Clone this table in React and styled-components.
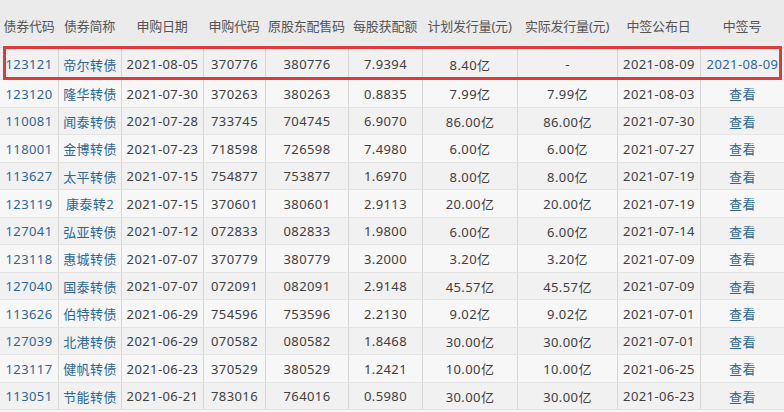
import React from "react";
import styled, { createGlobalStyle } from "styled-components";

const Global = createGlobalStyle`
  html, body { margin: 0; padding: 0; background: #ffffff; }
  body { font-family: "Noto Sans", "Noto Sans CJK SC", sans-serif; }
`;

const COLS = "58px 63px 82px 62px 83px 74px 95px 100px 83px 84px";

const Table = styled.div`
  width: 784px;
  height: 412px;
  overflow: hidden;
  background: #f3f3f3;
  font-size: 13px;
  color: #404040;
`;

const HeaderRow = styled.div`
  display: grid;
  grid-template-columns: ${COLS};
  height: 48px;
  background: #ebebeb;
  border-bottom: 1px solid #dcdcdc;
  box-sizing: border-box;
`;

const HeadCell = styled.div`
  display: flex;
  align-items: flex-end;
  justify-content: center;
  padding-bottom: 12px;
  color: #555555;
  white-space: nowrap;
  letter-spacing: -0.2px;
`;

const Row = styled.div`
  position: relative;
  display: grid;
  grid-template-columns: ${COLS};
  height: ${(p) => (p.$first ? "32px" : "27.5px")};
  background: ${(p) => (p.$odd ? "#f7f7f7" : "#f1f1f1")};
  border-bottom: 1px solid #e4e4e4;
  box-sizing: border-box;
`;

const HighlightBox = styled.div`
  position: absolute;
  left: 3px;
  right: 2px;
  top: -2px;
  bottom: -1px;
  border: 3px solid #de3b3f;
  pointer-events: none;
`;

const Cell = styled.div`
  display: flex;
  align-items: center;
  justify-content: center;
  white-space: nowrap;
  letter-spacing: 0.4px;
  padding-top: 1px;
  border-left: ${(p) => (p.$noBorder ? "none" : "1px solid #d6d6d6")};
  color: ${(p) => (p.$link ? "#2c6797" : "#404040")};
`;

const rows = [
  ["123121", "帝尔转债", "2021-08-05", "370776", "380776", "7.9394", "8.40亿", "-", "2021-08-09", "2021-08-09"],
  ["123120", "隆华转债", "2021-07-30", "370263", "380263", "0.8835", "7.99亿", "7.99亿", "2021-08-03", "查看"],
  ["110081", "闻泰转债", "2021-07-28", "733745", "704745", "6.9070", "86.00亿", "86.00亿", "2021-07-30", "查看"],
  ["118001", "金博转债", "2021-07-23", "718598", "726598", "7.4980", "6.00亿", "6.00亿", "2021-07-27", "查看"],
  ["113627", "太平转债", "2021-07-15", "754877", "753877", "1.6970", "8.00亿", "8.00亿", "2021-07-19", "查看"],
  ["123119", "康泰转2", "2021-07-15", "370601", "380601", "2.9113", "20.00亿", "20.00亿", "2021-07-19", "查看"],
  ["127041", "弘亚转债", "2021-07-12", "072833", "082833", "1.9800", "6.00亿", "6.00亿", "2021-07-14", "查看"],
  ["123118", "惠城转债", "2021-07-07", "370779", "380779", "3.2000", "3.20亿", "3.20亿", "2021-07-09", "查看"],
  ["127040", "国泰转债", "2021-07-07", "072091", "082091", "2.9148", "45.57亿", "45.57亿", "2021-07-09", "查看"],
  ["113626", "伯特转债", "2021-06-29", "754596", "753596", "2.2130", "9.02亿", "9.02亿", "2021-07-01", "查看"],
  ["127039", "北港转债", "2021-06-29", "070582", "080582", "1.8468", "30.00亿", "30.00亿", "2021-07-01", "查看"],
  ["123117", "健帆转债", "2021-06-23", "370529", "380529", "1.2421", "10.00亿", "10.00亿", "2021-06-25", "查看"],
  ["113051", "节能转债", "2021-06-21", "783016", "764016", "0.5980", "30.00亿", "30.00亿", "2021-06-23", "查看"],
];

const headers = ["债券代码", "债券简称", "申购日期", "申购代码", "原股东配售码", "每股获配额", "计划发行量(元)", "实际发行量(元)", "中签公布日", "中签号"];
const linkCols = [0, 1, 9];

export default function App() {
  return (
    <>
      <Global />
      <Table>
        <HeaderRow>
          {headers.map((h) => (
            <HeadCell key={h}>{h}</HeadCell>
          ))}
        </HeaderRow>
        {rows.map((r, i) => (
          <Row key={r[0]} $first={i === 0} $odd={i % 2 === 1}>
            {r.map((v, j) => (
              <Cell key={j} $noBorder={j === 0} $link={linkCols.includes(j)}>
                {v}
              </Cell>
            ))}
            {i === 0 && <HighlightBox />}
          </Row>
        ))}
      </Table>
    </>
  );
}
